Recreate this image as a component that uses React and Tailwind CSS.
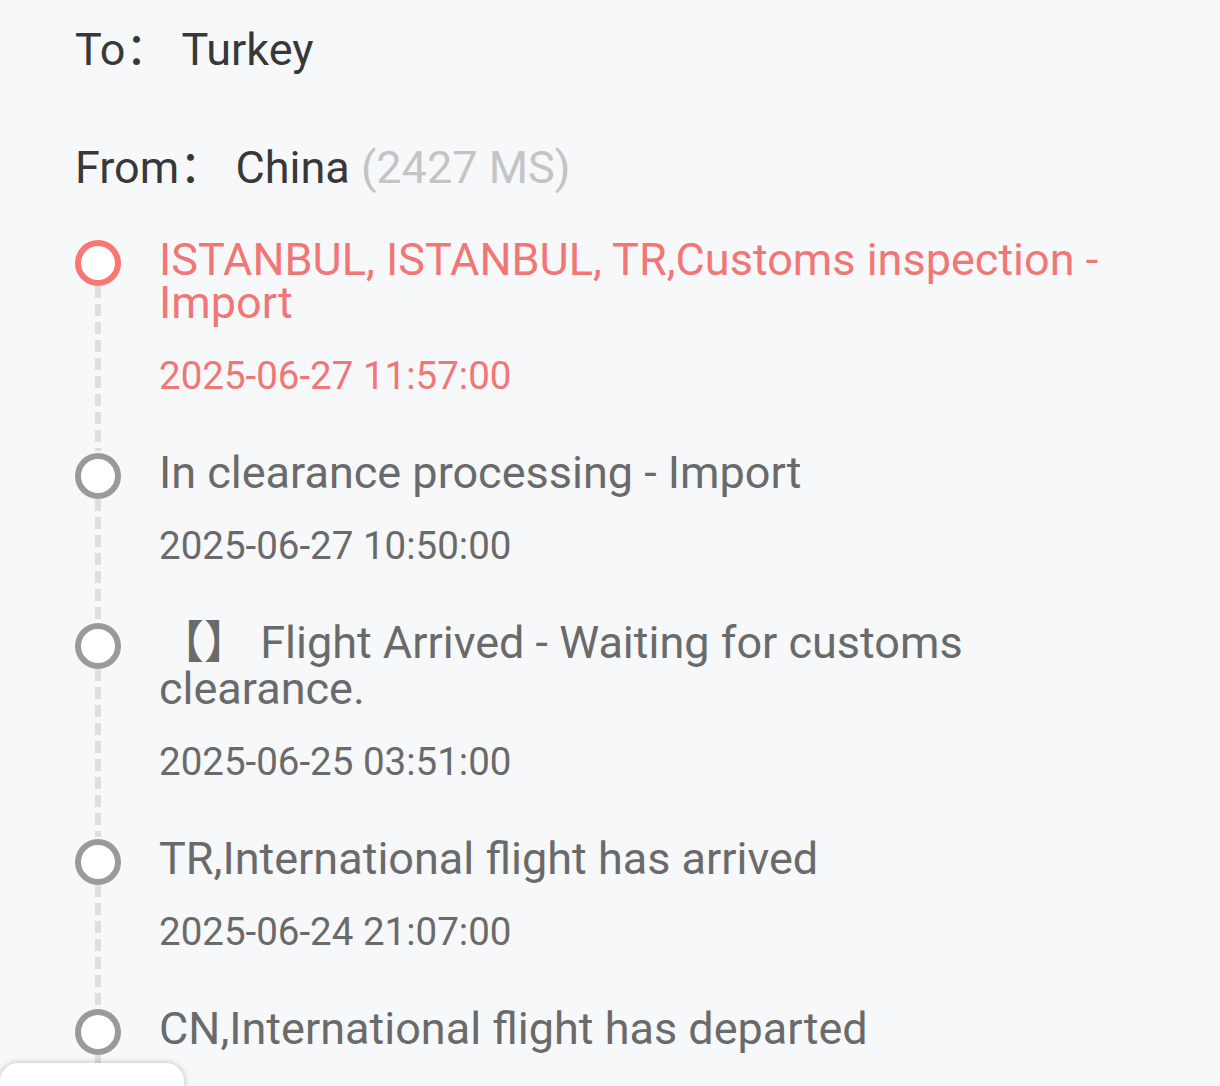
const events = [
  {
    title: "ISTANBUL, ISTANBUL, TR,Customs inspection - Import",
    time: "2025-06-27 11:57:00",
    active: true,
  },
  { title: "In clearance processing - Import", time: "2025-06-27 10:50:00" },
  {
    title: "Flight Arrived - Waiting for customs clearance.",
    bracket: true,
    time: "2025-06-25 03:51:00",
  },
  { title: "TR,International flight has arrived", time: "2025-06-24 21:07:00" },
  { title: "CN,International flight has departed" },
];

function TimelineItem({ item }) {
  const color = item.active ? "text-[#f17676]" : "text-[#6a6a6a]";
  return (
    <div className="flex">
      {/* dot + dashed rail */}
      <div className="w-[46px] flex flex-col items-center shrink-0">
        <div
          className={`mt-[2px] h-[46px] w-[46px] rounded-full bg-white border-[6px] shrink-0 ${
            item.active ? "border-[#fa7672]" : "border-[#9a9a9a]"
          }`}
        />
        <div className="w-[6px] flex-1 bg-[repeating-linear-gradient(to_bottom,#dedede_0_12px,transparent_12px_18px)]" />
      </div>
      <div className="ml-[38px] w-[946px] pb-[53px]">
        <p className={`text-[45px] leading-[43px] ${color}`}>
          {item.bracket && (
            <span className="align-top leading-[46px]">【】 </span>
          )}
          {item.title}
        </p>
        {item.time && (
          <p className={`mt-[30px] text-[38.5px] leading-[44px] ${color}`}>
            {item.time}
          </p>
        )}
      </div>
    </div>
  );
}

export default function App() {
  return (
    <div
      className="relative h-[1086px] w-full overflow-hidden bg-[#f7f8fa]"
      style={{ fontFamily: "Roboto, 'Noto Sans CJK SC', sans-serif" }}
    >
      <div className="px-[75px]">
        <div className="pt-[22px] text-[45px] leading-[56px] text-[#383838]">
          To：&nbsp;Turkey
        </div>
        <div className="mt-[62px] text-[45px] leading-[56px] text-[#383838]">
          From：&nbsp;China <span className="text-[#c4c4c4]">(2427 MS)</span>
        </div>
        <div className="mt-[42px]">
          {events.map((item, i) => (
            <TimelineItem key={i} item={item} />
          ))}
        </div>
      </div>

      {/* bottom tab peeking in */}
      <div className="absolute left-0 top-[1063px] h-[60px] w-[184px] rounded-t-[18px] bg-white shadow-[0_0_6px_rgba(0,0,0,0.25)]" />
    </div>
  );
}
